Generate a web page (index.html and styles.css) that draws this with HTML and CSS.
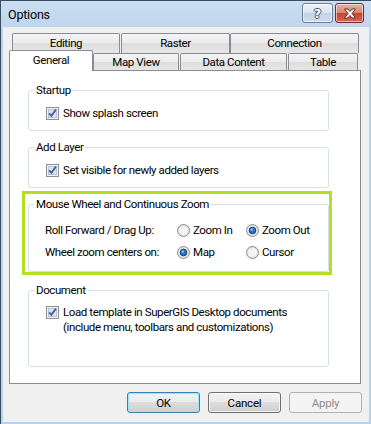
FILE: index.html
```html
<!DOCTYPE html>
<html lang="en">

<head>
    <meta charset="UTF-8">
    <title>Options</title>
    <link rel="stylesheet" href="styles.css">
</head>

<body>

    <div class="window">
        <div class="titlebar">
            <span class="title">Options</span>
            <div class="caption-buttons">
                <span class="cap-btn help">?</span>
                <span class="cap-btn close">
                    <svg width="16" height="11" viewBox="0 0 16 11">
                        <path d="M2.5 1 H6 L8 3.5 L10 1 H13.5 L10 5.5 L13.5 10 H10 L8 7.5 L6 10 H2.5 L6 5.5 Z" fill="#fff" stroke="#6b2b26" stroke-width="1" stroke-linejoin="round"/>
                    </svg>
                </span>
            </div>
        </div>

        <div class="client">
            <div class="tabs">
                <div class="tab-row back">
                    <div class="tab t-editing">Editing</div>
                    <div class="tab t-raster">Raster</div>
                    <div class="tab t-connection">Connection</div>
                </div>
                <div class="tab-row front">
                    <div class="tab selected t-general">General</div>
                    <div class="tab t-mapview">Map View</div>
                    <div class="tab t-data">Data Content</div>
                    <div class="tab t-table">Table</div>
                </div>
            </div>

            <div class="panel">
                <fieldset class="group">
                    <legend>Startup</legend>
                    <label class="check">
                        <svg class="box" width="13" height="13" viewBox="0 0 13 13"><rect x="0.5" y="0.5" width="12" height="12" fill="#f3f3f3" stroke="#8e8f8f"/><rect x="2.5" y="2.5" width="8" height="8" fill="#dde3ee" stroke="#b9c2d2"/><path d="M3.2 6.3 L5.4 8.8 L9.9 2.6" fill="none" stroke="#3f5ea8" stroke-width="1.8"/></svg>
                        <span>Show splash screen</span>
                    </label>
                </fieldset>

                <fieldset class="group">
                    <legend>Add Layer</legend>
                    <label class="check">
                        <svg class="box" width="13" height="13" viewBox="0 0 13 13"><rect x="0.5" y="0.5" width="12" height="12" fill="#f3f3f3" stroke="#8e8f8f"/><rect x="2.5" y="2.5" width="8" height="8" fill="#dde3ee" stroke="#b9c2d2"/><path d="M3.2 6.3 L5.4 8.8 L9.9 2.6" fill="none" stroke="#3f5ea8" stroke-width="1.8"/></svg>
                        <span>Set visible for newly added layers</span>
                    </label>
                </fieldset>

                <div class="highlight">
                    <fieldset class="group wheel">
                        <legend>Mouse Wheel and Continuous Zoom</legend>
                        <div class="radio-row">
                            <span class="row-label">Roll Forward / Drag Up:</span>
                            <label class="radio">
                                <svg width="13" height="13" viewBox="0 0 13 13"><circle cx="6.5" cy="6.5" r="6" fill="#e4e4e4" stroke="#8d8d8d"/><circle cx="6.5" cy="6.5" r="4.3" fill="#f4f4f4"/></svg>
                                <span>Zoom In</span>
                            </label>
                            <label class="radio">
                                <svg width="13" height="13" viewBox="0 0 13 13"><circle cx="6.5" cy="6.5" r="6" fill="#e4e4e4" stroke="#8d8d8d"/><circle cx="6.5" cy="6.5" r="3.3" fill="#1c78c4" stroke="#1f3f6e"/><circle cx="5.8" cy="5.6" r="1.2" fill="#8fd0f5"/></svg>
                                <span>Zoom Out</span>
                            </label>
                        </div>
                        <div class="radio-row">
                            <span class="row-label">Wheel zoom centers on:</span>
                            <label class="radio">
                                <svg width="13" height="13" viewBox="0 0 13 13"><circle cx="6.5" cy="6.5" r="6" fill="#e4e4e4" stroke="#8d8d8d"/><circle cx="6.5" cy="6.5" r="3.3" fill="#1c78c4" stroke="#1f3f6e"/><circle cx="5.8" cy="5.6" r="1.2" fill="#8fd0f5"/></svg>
                                <span>Map</span>
                            </label>
                            <label class="radio">
                                <svg width="13" height="13" viewBox="0 0 13 13"><circle cx="6.5" cy="6.5" r="6" fill="#e4e4e4" stroke="#8d8d8d"/><circle cx="6.5" cy="6.5" r="4.3" fill="#f4f4f4"/></svg>
                                <span>Cursor</span>
                            </label>
                        </div>
                    </fieldset>
                </div>

                <fieldset class="group doc">
                    <legend>Document</legend>
                    <label class="check">
                        <svg class="box" width="13" height="13" viewBox="0 0 13 13"><rect x="0.5" y="0.5" width="12" height="12" fill="#f3f3f3" stroke="#8e8f8f"/><rect x="2.5" y="2.5" width="8" height="8" fill="#dde3ee" stroke="#b9c2d2"/><path d="M3.2 6.3 L5.4 8.8 L9.9 2.6" fill="none" stroke="#3f5ea8" stroke-width="1.8"/></svg>
                        <span>Load template in SuperGIS Desktop documents<br>(include menu, toolbars and customizations)</span>
                    </label>
                </fieldset>
            </div>

            <div class="buttons">
                <button class="btn default">OK</button>
                <button class="btn">Cancel</button>
                <button class="btn" disabled>Apply</button>
            </div>
        </div>
    </div>

</body>

</html>
```

FILE: styles.css
```css
body {
    margin: 0;
    font-family: 'Roboto', 'Liberation Sans', sans-serif;
    font-size: 11.5px;
    letter-spacing: -0.4px;
    line-height: 15px;
    color: #000;
    background-color: #fff;
}

.window {
    width: 370px;
    height: 423px;
    border-top: 1px solid #3a4d60;
    border-left: 1px solid #3a4d60;
    border-bottom: 1px solid #3a4d60;
    background: linear-gradient(#cbdef2, #b9d1ea 40px);
    display: flex;
    flex-direction: column;
    overflow: hidden;
}

/* title bar */

.titlebar {
    height: 26px;
    display: flex;
    justify-content: space-between;
    align-items: flex-start;
    padding-left: 7px;
}

.title {
    margin-top: 6px;
    font-size: 12.5px;
    letter-spacing: -0.2px;
    color: #000;
}

.caption-buttons {
    display: flex;
    gap: 2px;
    margin-top: 2px;
    margin-right: 7px;
}

.cap-btn {
    height: 18px;
    border: 1px solid #6c7f95;
    border-radius: 3px;
    display: flex;
    align-items: center;
    justify-content: center;
    box-shadow: inset 0 0 0 1px rgba(255, 255, 255, 0.55);
}

.help {
    width: 29px;
    background: linear-gradient(#eef3f9, #d8e3ef 50%, #c2d3e6 50%, #cfdcec);
    font-family: 'DejaVu Sans', sans-serif;
    font-weight: bold;
    font-size: 13px;
    letter-spacing: 0;
    color: #fff;
    text-shadow: 1px 0 #44546a, -1px 0 #44546a, 0 1px #44546a, 0 -1px #44546a;
}

.close {
    width: 27px;
    border-color: #6e302b;
    background: linear-gradient(#e8b1a6, #d98471 50%, #c4432f 50%, #d46a4f);
}

/* client area */

.client {
    flex: 1;
    margin: 0 2px 2px 2px;
    background-color: #f0f0f0;
    padding: 6px 8px 0 6px;
}

.tab-row {
    display: flex;
    align-items: flex-end;
}

.tab-row.back {
    height: 20px;
    margin-left: 3px;
}

.tab-row.front {
    height: 20px;
    margin-top: -3px;
}

.tab {
    box-sizing: border-box;
    border: 1px solid #898c95;
    border-bottom: none;
    border-radius: 2px 2px 0 0;
    background: linear-gradient(#f4f4f4, #ebebeb 50%, #dedede 50%, #e6e6e6);
    text-align: center;
}

.back .tab {
    height: 20px;
    line-height: 19px;
}

.front .tab {
    height: 17px;
    line-height: 16px;
}

.front .tab.selected {
    position: relative;
    z-index: 2;
    height: 21px;
    line-height: 19px;
    margin-bottom: -1px;
    background: #fff;
}

.t-editing { width: 108px; }
.t-raster { width: 109px; margin-left: 1px; }
.t-connection { width: 129px; }

.t-general { width: 84px; }
.t-mapview { width: 86px; }
.t-data { width: 107px; margin-left: 1px; }
.t-table { width: 70px; margin-left: 1px; }

/* tab page */

.panel {
    border: 1px solid #898c95;
    background-color: #fff;
    padding: 12px 0 16px 18px;
}

.group {
    box-sizing: border-box;
    width: 301px;
    margin: 0;
    padding: 9px 0 9px 16px;
    border: 1px solid #d5dfe5;
    border-radius: 3px;
}

.group legend {
    margin-left: -11px;
    padding: 0 2px;
    line-height: 14px;
}

.group + .group {
    margin-top: 9px;
}

.highlight {
    box-sizing: border-box;
    width: 310px;
    margin: 3px 0 0 -6px;
    padding: 3px 0 0 3px;
    border: 3px solid #b5e022;
}

.highlight + .group {
    margin-top: 8px;
}

.group.wheel {
    padding-top: 8px;
    padding-bottom: 8px;
}

.group.doc {
    padding-top: 8px;
    padding-bottom: 31px;
}

.check {
    display: flex;
    align-items: flex-start;
    gap: 4px;
    margin-left: 1px;
}

.check .box {
    flex: none;
    margin-top: 1px;
}

.radio-row {
    display: grid;
    grid-template-columns: 132px 69px auto;
    align-items: center;
    height: 22px;
    white-space: nowrap;
}

.radio {
    display: flex;
    align-items: center;
    gap: 3px;
}

.radio svg {
    flex: none;
}

/* dialog buttons */

.buttons {
    display: flex;
    justify-content: flex-end;
    gap: 8px;
    margin-top: 8px;
    margin-right: -1px;
}

.btn {
    width: 73px;
    height: 21px;
    padding: 0;
    font-family: inherit;
    font-size: 11.5px;
    letter-spacing: -0.2px;
    color: #000;
    border: 1px solid #707070;
    border-radius: 3px;
    background: linear-gradient(#f2f2f2, #ebebeb 50%, #dddddd 50%, #cfcfcf);
    box-shadow: inset 0 0 0 1px rgba(255, 255, 255, 0.7);
}

.btn.default {
    border-color: #3c7fb1;
    box-shadow: inset 0 0 0 1px #9fe3fb;
}

.btn:disabled {
    color: #8b8b8b;
    border-color: #adb2b5;
    background: #f4f4f4;
    box-shadow: none;
}
```
